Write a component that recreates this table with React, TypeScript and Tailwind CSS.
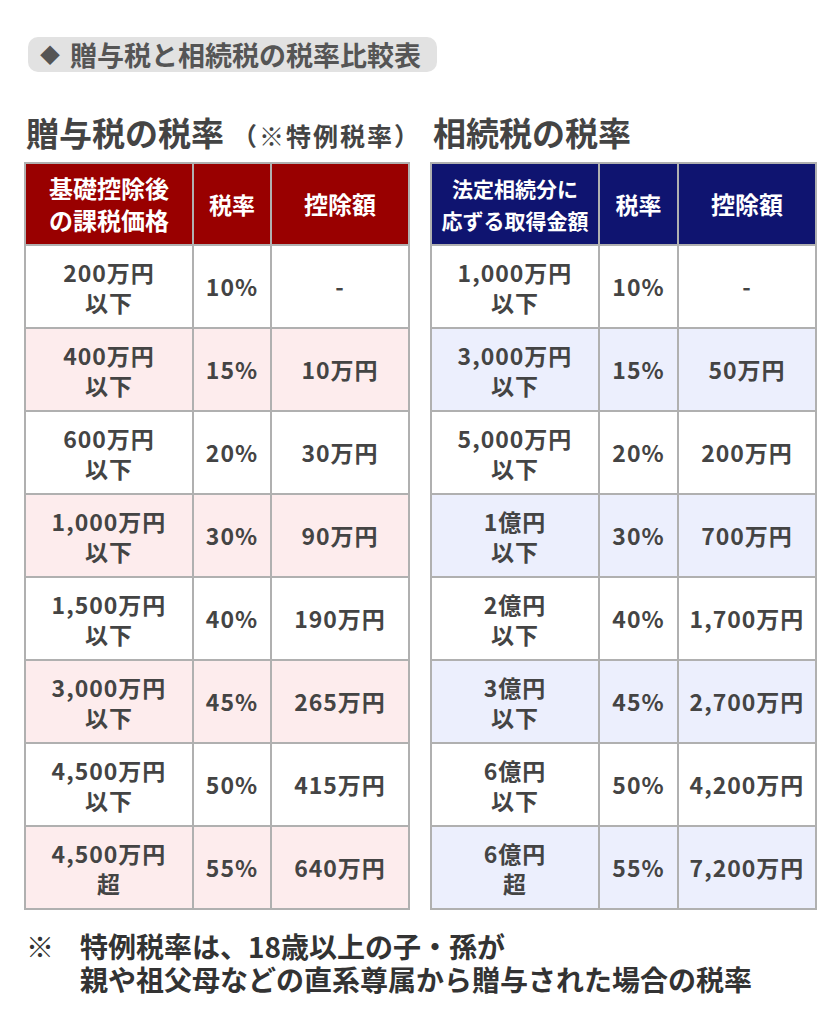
const font = { fontFamily: '"Noto Sans CJK JP", "Noto Sans", sans-serif' };

const giftRows = [
  ["200万円", "以下", "10%", "-"],
  ["400万円", "以下", "15%", "10万円"],
  ["600万円", "以下", "20%", "30万円"],
  ["1,000万円", "以下", "30%", "90万円"],
  ["1,500万円", "以下", "40%", "190万円"],
  ["3,000万円", "以下", "45%", "265万円"],
  ["4,500万円", "以下", "50%", "415万円"],
  ["4,500万円", "超", "55%", "640万円"],
];

const inheritRows = [
  ["1,000万円", "以下", "10%", "-"],
  ["3,000万円", "以下", "15%", "50万円"],
  ["5,000万円", "以下", "20%", "200万円"],
  ["1億円", "以下", "30%", "700万円"],
  ["2億円", "以下", "40%", "1,700万円"],
  ["3億円", "以下", "45%", "2,700万円"],
  ["6億円", "以下", "50%", "4,200万円"],
  ["6億円", "超", "55%", "7,200万円"],
];

function RateTable({
  head,
  headSize,
  rows,
  headBg,
  altBg,
  cols,
}: {
  head: [string, string];
  headSize: string;
  rows: string[][];
  headBg: string;
  altBg: string;
  cols: [string, string, string];
}) {
  return (
    <table className="w-full table-fixed border-collapse border-2 border-[#b0b0b0] text-center">
      <colgroup>
        <col className={cols[0]} />
        <col className={cols[1]} />
        <col className={cols[2]} />
      </colgroup>
      <thead>
        <tr className={`h-[82px] ${headBg} text-white`}>
          <th className={`${headSize} border-2 border-[#b0b0b0] leading-[32px] font-bold whitespace-nowrap`}>
            {head[0]}
            <br />
            {head[1]}
          </th>
          <th className="border-2 border-[#b0b0b0] text-[23px] font-bold">税率</th>
          <th className="border-2 border-[#b0b0b0] text-[24px] font-bold">控除額</th>
        </tr>
      </thead>
      <tbody className="text-[#444] font-bold text-[23px] tracking-[1px] whitespace-nowrap">
        {rows.map((r, i) => (
          <tr key={i} className={`h-[83px] ${i % 2 === 1 ? altBg : "bg-white"}`}>
            <td className="border-2 border-[#b0b0b0] leading-[30px]">
              {r[0]}
              <br />
              {r[1]}
            </td>
            <td className="border-2 border-[#b0b0b0]">{r[2]}</td>
            <td className="border-2 border-[#b0b0b0]">{r[3]}</td>
          </tr>
        ))}
      </tbody>
    </table>
  );
}

export default function App() {
  return (
    <div className="w-[837px] h-[1024px] bg-white pt-[37px] px-[24px]" style={font}>
      <div className="ml-[4px] w-[409px] h-[35px] rounded-[10px] bg-[#e2e2e2] flex items-center pl-[12px] text-[27px] font-bold text-[#555] leading-none whitespace-nowrap">
        <span className="text-[20px] mr-[10px]">◆</span>
        贈与税と相続税の税率比較表
      </div>

      <div className="flex mt-[40px] gap-[22px]">
        <div className="w-[384px] shrink-0">
          <h2 className="ml-[2px] h-[50px] flex items-baseline text-[33px] font-bold text-[#444] leading-[40px] whitespace-nowrap">
            贈与税の税率
            <span className="ml-[8px] text-[25px] tracking-[2px]">（※特例税率）</span>
          </h2>
          <RateTable
            head={["基礎控除後", "の課税価格"]}
            headSize="text-[24px]"
            rows={giftRows}
            headBg="bg-[#990000]"
            altBg="bg-[#fdeced]"
            cols={["w-[168px]", "w-[78px]", "w-[138px]"]}
          />
        </div>
        <div className="w-[385px] shrink-0">
          <h2 className="ml-[3px] h-[50px] flex items-baseline text-[33px] font-bold text-[#444] leading-[40px] whitespace-nowrap">
            相続税の税率
          </h2>
          <RateTable
            head={["法定相続分に", "応ずる取得金額"]}
            headSize="text-[21px]"
            rows={inheritRows}
            headBg="bg-[#0f1470]"
            altBg="bg-[#eceffd]"
            cols={["w-[168px]", "w-[79px]", "w-[138px]"]}
          />
        </div>
      </div>

      <div className="mt-[20px] flex text-[28px] font-bold text-[#333] leading-[33px]">
        <span className="ml-[2px] w-[54px]">※</span>
        <div>
          特例税率は、18歳以上の子・孫が
          <br />
          親や祖父母などの直系尊属から贈与された場合の税率
        </div>
      </div>
    </div>
  );
}
